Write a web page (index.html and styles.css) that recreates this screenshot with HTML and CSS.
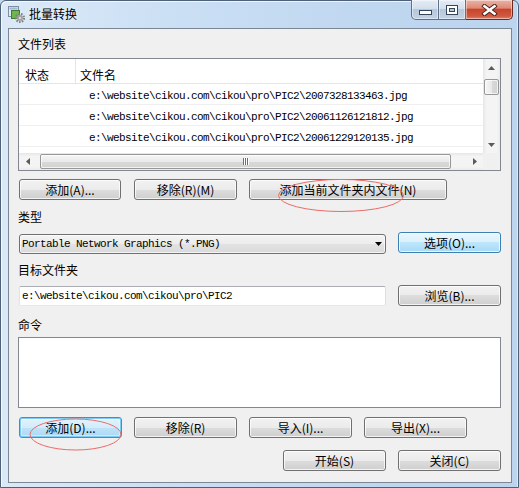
FILE: index.html
```html
<!DOCTYPE html>
<html lang="zh-CN">
<head>
<meta charset="utf-8">
<title>批量转换</title>
<link rel="stylesheet" href="styles.css">
</head>
<body>
<div class="window">
  <div class="titlebar">
    <svg class="app-icon" width="18" height="18" viewBox="0 0 18 18">
      <rect x="1.5" y="1.5" width="10" height="10" fill="#e3ecf5" stroke="#7d8ea3"/>
      <rect x="2.5" y="2.5" width="8" height="2" fill="#9fb6cf"/>
      <rect x="4.5" y="5.5" width="8" height="8" fill="#6cb84a" stroke="#3f7a33"/>
      <circle cx="13" cy="13" r="3.9" fill="none" stroke="#7e7e7e" stroke-width="2.4" stroke-dasharray="1.5 1.2"/>
      <circle cx="13" cy="13" r="2.9" fill="#a4a4a4"/>
      <circle cx="13" cy="13" r="1.1" fill="#e6e6e6"/>
    </svg>
    <span class="title">批量转换</span>
    <div class="caption">
      <div class="cap cap-min"><span class="min-glyph"></span></div>
      <div class="cap cap-max">
        <svg width="12" height="10" viewBox="0 0 12 10">
          <rect x="0.5" y="0.5" width="11" height="9" fill="none" stroke="#34465a"/>
          <rect x="1.5" y="1.5" width="9" height="7" fill="none" stroke="#ffffff"/>
          <rect x="2.5" y="2.5" width="7" height="5" fill="none" stroke="#ffffff"/>
          <rect x="3.5" y="3.5" width="5" height="3" fill="#b9c9da" stroke="#34465a"/>
        </svg>
      </div>
      <div class="cap cap-close">
        <svg width="17" height="12" viewBox="0 0 17 12">
          <path d="M3.5 2.2 L13.5 9.8 M13.5 2.2 L3.5 9.8" stroke="#4a2119" stroke-width="4.4" stroke-linecap="square"/>
          <path d="M3.5 2.2 L13.5 9.8 M13.5 2.2 L3.5 9.8" stroke="#ffffff" stroke-width="2.6" stroke-linecap="square"/>
        </svg>
      </div>
    </div>
  </div>

  <div class="frame-body">
    <div class="client">
      <div class="label lbl-files">文件列表</div>

      <div class="list">
        <div class="list-view">
          <div class="list-head">
            <div class="col-state">状态</div>
            <div class="col-name">文件名</div>
          </div>
          <div class="list-row mono">e:\website\cikou.com\cikou\pro\PIC2\2007328133463.jpg</div>
          <div class="list-row mono">e:\website\cikou.com\cikou\pro\PIC2\20061126121812.jpg</div>
          <div class="list-row mono">e:\website\cikou.com\cikou\pro\PIC2\20061229120135.jpg</div>
          <div class="list-row mono"></div>
        </div>
        <div class="vscroll">
          <div class="sb-btn">
            <svg width="7" height="4" viewBox="0 0 7 4"><path d="M0 4 L3.5 0 L7 4 Z" fill="#5a5a5a"/></svg>
          </div>
          <div class="vtrack"><div class="vthumb"></div></div>
          <div class="sb-btn">
            <svg width="7" height="4" viewBox="0 0 7 4"><path d="M0 0 L3.5 4 L7 0 Z" fill="#5a5a5a"/></svg>
          </div>
        </div>
        <div class="hscroll">
          <div class="sb-btn">
            <svg width="4" height="7" viewBox="0 0 4 7"><path d="M4 0 L0 3.5 L4 7 Z" fill="#5a5a5a"/></svg>
          </div>
          <div class="htrack">
            <div class="hthumb"><span class="grip"></span><span class="grip"></span><span class="grip"></span></div>
          </div>
          <div class="sb-btn">
            <svg width="4" height="7" viewBox="0 0 4 7"><path d="M0 0 L4 3.5 L0 7 Z" fill="#5a5a5a"/></svg>
          </div>
        </div>
        <div class="sb-corner"></div>
      </div>

      <div class="btn-row row-list">
        <div class="btn w102">添加(A)...</div>
        <div class="btn w103 gap13">移除(R)(M)</div>
        <div class="btn w198 gap12">添加当前文件夹内文件(N)
          <svg class="mark mark-1" width="128" height="35" viewBox="0 0 128 35"><ellipse cx="64" cy="17.5" rx="62.5" ry="16" fill="none" stroke="#ec6a6a" stroke-width="1"/></svg>
        </div>
      </div>

      <div class="label lbl-type">类型</div>
      <div class="field-row row-type">
        <div class="combo mono">Portable Network Graphics (*.PNG)
          <svg class="combo-arrow" width="7" height="4" viewBox="0 0 7 4"><path d="M0 0 L7 0 L3.5 4 Z" fill="#000"/></svg>
        </div>
        <div class="btn w103 btn-hot">选项(O)...</div>
      </div>

      <div class="label lbl-target">目标文件夹</div>
      <div class="field-row row-target">
        <div class="path-input mono">e:\website\cikou.com\cikou\pro\PIC2</div>
        <div class="btn w103">浏览(B)...</div>
      </div>

      <div class="label lbl-cmd">命令</div>
      <div class="cmd-box"></div>

      <div class="btn-row row-cmd">
        <div class="btn w103 btn-focus">添加(D)...
          <svg class="mark mark-2" width="93" height="33" viewBox="0 0 93 33"><ellipse cx="46.5" cy="16.5" rx="45.5" ry="15.5" fill="none" stroke="#ec6a6a" stroke-width="1"/></svg>
        </div>
        <div class="btn w103 gap12">移除(R)</div>
        <div class="btn w103 gap12">导入(I)...</div>
        <div class="btn w103 gap12">导出(X)...</div>
      </div>

      <div class="btn-row row-final">
        <div class="btn w103">开始(S)</div>
        <div class="btn w103 gap12">关闭(C)</div>
      </div>
    </div>
  </div>
</div>
</body>
</html>
```

FILE: styles.css
```css
* {
  box-sizing: border-box;
}

html, body {
  margin: 0;
  padding: 0;
}

body {
  width: 519px;
  height: 488px;
  overflow: hidden;
  font-family: "Noto Sans CJK SC", "Liberation Sans", sans-serif;
  font-size: 12px;
  color: #000;
  background: #c3d9f1;
}

.mono {
  font-family: "Liberation Mono", "Noto Sans CJK SC", monospace;
  font-size: 11px;
  letter-spacing: -0.6px;
}

.window {
  width: 519px;
  height: 488px;
  border: 1px solid #4e6176;
  border-radius: 6px 6px 0 0;
  background: linear-gradient(to right, #dbe9f7 0%, #cadff4 35%, #c0d7f0 70%, #bcd4ee 100%);
  display: flex;
  flex-direction: column;
  box-shadow: inset 1px 1px 0 rgba(255, 255, 255, 0.7), inset -1px 0 0 rgba(255, 255, 255, 0.5);
}

/* ---------- title bar ---------- */
.titlebar {
  height: 27px;
  display: flex;
  align-items: flex-start;
  padding-left: 6px;
  flex: none;
}

.app-icon {
  margin-top: 4px;
  flex: none;
}

.title {
  margin-left: 4px;
  margin-top: 6px;
  line-height: 14px;
  font-size: 12px;
  color: #000;
  text-shadow: 0 0 6px rgba(255, 255, 255, 0.9);
}

.caption {
  margin-left: auto;
  margin-right: 5px;
  margin-top: -1px;
  display: flex;
  height: 20px;
}

.cap {
  height: 20px;
  border: 1px solid #5f7186;
  border-top: none;
  display: flex;
  justify-content: center;
  box-shadow: inset 0 0 0 1px rgba(255, 255, 255, 0.45);
}

.cap-min {
  width: 28px;
  border-radius: 0 0 0 5px;
  background: linear-gradient(#e4edf6 0%, #d3dfec 45%, #b7c8da 50%, #c3d3e4 100%);
  align-items: flex-start;
}

.cap-max {
  width: 27px;
  border-left: none;
  background: linear-gradient(#e4edf6 0%, #d3dfec 45%, #b7c8da 50%, #c3d3e4 100%);
  align-items: flex-start;
  padding-top: 5px;
}

.cap-close {
  width: 47px;
  border-left: none;
  border-color: #6b2a1f;
  border-radius: 0 0 5px 0;
  background: linear-gradient(#eab3a6 0%, #de8a76 42%, #c8452c 50%, #cf5a40 85%, #e0826b 100%);
  align-items: flex-start;
  padding-top: 4px;
}

.min-glyph {
  display: block;
  width: 13px;
  height: 5px;
  margin-top: 10px;
  background: #fff;
  border: 1px solid #34465a;
}

/* ---------- frame / client ---------- */
.frame-body {
  flex: 1;
  padding: 0 6px 4px 7px;
}

.client {
  height: 455px;
  border: 1px solid #7b8795;
  background: #f0f0f0;
  padding: 0 10px 0 9px;
  display: flex;
  flex-direction: column;
}

.label {
  line-height: 14px;
  height: 14px;
  white-space: nowrap;
}

.lbl-files { margin-top: 8px; }
.lbl-type { margin-top: 10px; }
.lbl-target { margin-top: 9px; }
.lbl-cmd { margin-top: 12px; }

/* ---------- list view ---------- */
.list {
  margin-top: 7px;
  height: 113px;
  border: 1px solid #828790;
  background: #fff;
  display: grid;
  grid-template-columns: 1fr 17px;
  grid-template-rows: 1fr 17px;
  flex: none;
}

.list-view {
  grid-row: 1;
  grid-column: 1;
  overflow: hidden;
}

.list-head {
  display: flex;
  height: 25px;
  border-bottom: 1px solid #e5e5e5;
  align-items: stretch;
}

.col-state {
  width: 57px;
  border-right: 1px solid #e5e5e5;
  padding-left: 6px;
  padding-top: 9px;
  line-height: 14px;
}

.col-name {
  padding-left: 4px;
  padding-top: 9px;
  line-height: 14px;
}

.list-row {
  height: 21px;
  border-bottom: 1px solid #f0f0f0;
  padding-left: 70px;
  padding-top: 6px;
  line-height: 13px;
  white-space: nowrap;
}

.vscroll {
  grid-row: 1;
  grid-column: 2;
  display: flex;
  flex-direction: column;
  background: linear-gradient(to right, #e6e6e6 0%, #f4f4f4 20%, #f4f4f4 80%, #ebebeb 100%);
}

.sb-btn {
  width: 17px;
  height: 17px;
  flex: none;
  display: flex;
  align-items: center;
  justify-content: center;
}

.vtrack {
  flex: 1;
  padding: 3px 1px 0 1px;
}

.vthumb {
  height: 16px;
  border: 1px solid #979797;
  border-radius: 2px;
  background: linear-gradient(to right, #f6f6f6 0%, #e9e9e9 50%, #d9d9d9 51%, #d2d2d2 100%);
  box-shadow: inset 0 0 0 1px rgba(255, 255, 255, 0.7);
}

.hscroll {
  grid-row: 2;
  grid-column: 1;
  display: flex;
  background: linear-gradient(#e6e6e6 0%, #f4f4f4 20%, #f4f4f4 80%, #ebebeb 100%);
}

.htrack {
  flex: 1;
  padding: 1px 15px 1px 4px;
}

.hthumb {
  height: 15px;
  border: 1px solid #979797;
  border-radius: 2px;
  background: linear-gradient(#f6f6f6 0%, #e9e9e9 50%, #d9d9d9 51%, #d2d2d2 100%);
  box-shadow: inset 0 0 0 1px rgba(255, 255, 255, 0.7);
  display: flex;
  align-items: center;
  justify-content: center;
  gap: 1px;
}

.grip {
  width: 1px;
  height: 7px;
  background: #6f6f6f;
  box-shadow: 1px 0 0 #ffffff;
}

.sb-corner {
  grid-row: 2;
  grid-column: 2;
  background: #f0f0f0;
}

/* ---------- buttons ---------- */
.btn-row {
  display: flex;
  flex: none;
  padding-left: 1px;
}

.row-list { margin-top: 8px; }
.row-cmd { margin-top: 9px; }
.row-final {
  margin-top: 12px;
  justify-content: flex-end;
}

.btn {
  position: relative;
  height: 21px;
  border: 1px solid #707070;
  border-radius: 3px;
  background: linear-gradient(#f2f2f2 0%, #ebebeb 50%, #dddddd 50%, #cfcfcf 100%);
  box-shadow: inset 0 0 0 1px rgba(255, 255, 255, 0.75);
  display: flex;
  align-items: center;
  justify-content: center;
  line-height: 14px;
  white-space: nowrap;
  flex: none;
}

.w102 { width: 102px; }
.w103 { width: 103px; }
.w198 { width: 198px; }
.gap12 { margin-left: 12px; }
.gap13 { margin-left: 13px; }

.btn-hot {
  border-color: #3c7fb1;
  background: linear-gradient(#eaf6fd 0%, #d9f0fc 50%, #bee6fd 50%, #a7d9f5 100%);
}

.btn-focus {
  border-color: #2f95d9;
  background: linear-gradient(#e3f3fc 0%, #d3ecfa 50%, #bfe3f8 50%, #acd8f3 100%);
  box-shadow: inset 0 0 0 1px #7fcbf3, inset 0 0 0 2px rgba(255, 255, 255, 0.4);
}

.mark {
  position: absolute;
  pointer-events: none;
  overflow: visible;
}

.mark-1 {
  left: 27px;
  top: -2px;
}

.mark-2 {
  left: 9px;
  top: 0px;
}

/* ---------- fields ---------- */
.field-row {
  display: flex;
  flex: none;
  padding-left: 1px;
  gap: 12px;
  align-items: flex-start;
}

.row-type { margin-top: 8px; }
.row-target { margin-top: 8px; }

.combo {
  width: 367px;
  height: 20px;
  margin-top: 2px;
  border: 1px solid #707070;
  border-radius: 3px;
  background: linear-gradient(#f4f4f4 0%, #ececec 50%, #e2e2e2 51%, #dadada 100%);
  box-shadow: inset 0 0 0 1px rgba(255, 255, 255, 0.7);
  display: flex;
  align-items: center;
  padding-left: 2px;
  line-height: 13px;
  white-space: nowrap;
}

.combo-arrow {
  margin-left: auto;
  margin-right: 3px;
  flex: none;
}

.path-input {
  width: 367px;
  height: 20px;
  margin-top: 1px;
  background: #fff;
  border: 1px solid;
  border-color: #abadb3 #dbdfe6 #e3e9ef #e2e3ea;
  border-radius: 2px;
  padding-left: 2px;
  display: flex;
  align-items: center;
  line-height: 13px;
  white-space: nowrap;
}

.cmd-box {
  margin-top: 5px;
  height: 71px;
  border: 1px solid #828790;
  background: #fff;
  flex: none;
}
```
